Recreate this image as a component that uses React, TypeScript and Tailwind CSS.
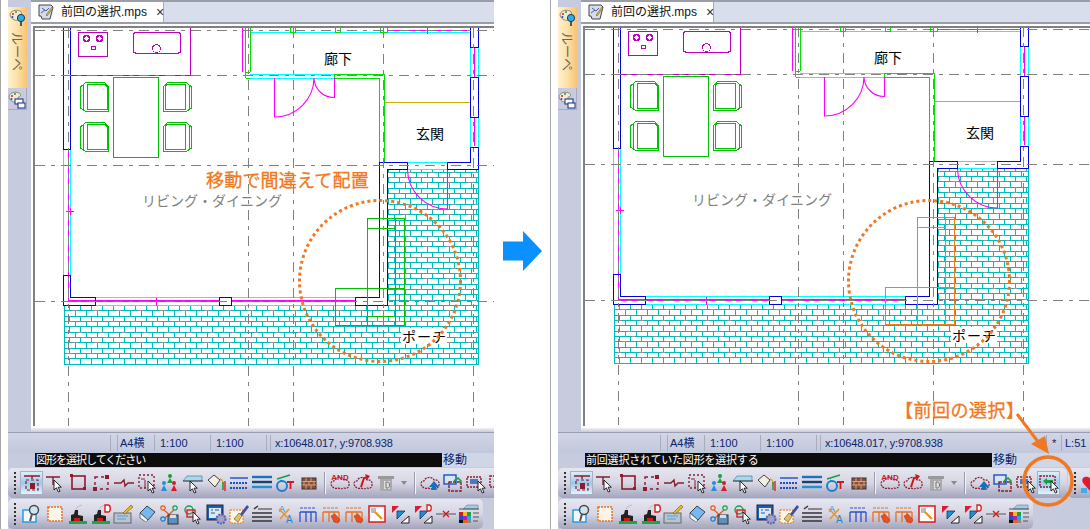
import type { ReactNode } from 'react'

const DR = '#8a1c2c'
const BL = '#1c50c8'

function Cur({ x, y }: { x: number; y: number }) {
  return (
    <path
      transform={`translate(${x} ${y})`}
      d="M0 0v10l2.4-2.2 1.9 4.2 1.7-.8-1.9-4h3.2z"
      fill="#fff"
      stroke="#111"
      strokeWidth="0.9"
    />
  )
}

function Cloud({ c = DR }: { c?: string }) {
  return (
    <path
      d="M3 14c-2-2-1-5 2-5 1-4 8-5 10-1 3-1 6 2 5 5 0 3-3 4-5 3-2 1-4 1-6 0-2 1-5 0-6-2z"
      fill="none"
      stroke={c}
      strokeWidth="1.2"
      strokeDasharray="2 1"
    />
  )
}

function Factory({ d }: { d?: boolean }) {
  return (
    <>
      <rect x="2" y="18" width="18" height="3" fill="#18a848" />
      <path d="M4 18v-6l3-1 1-4h3v5l5 1v5z" fill="#222" />
      <path d="M9 6c1-3 4-3 6-4" stroke="#bbb" fill="none" />
      <rect x="7" y="15" width="6" height="3" fill="#d01818" />
      {d && <path d="M15 2h3c3 0 3 7 0 7h-3z" fill="#fff" stroke="#e01818" strokeWidth="1.4" />}
    </>
  )
}

function Fence({ c, pencil }: { c: string; pencil?: boolean }) {
  return (
    <>
      <path d="M3 5h16" stroke={c} strokeDasharray="3 1" />
      <path d="M3 9h16M3 9v10M9 9v10M14 9v10M19 9v10" stroke={c} strokeWidth="1.3" fill="none" />
      {pencil && <path d="M11 13l4-2 5 6-2 3-4-1z" fill="#e85020" stroke="#a83010" strokeWidth="0.5" />}
    </>
  )
}

function Tri({ d }: { d?: boolean }) {
  return (
    <>
      <path d="M3 3h7l-7 7z" fill="#e01830" />
      <path d="M8 8h8l-8 8z" fill="#1890e0" stroke="#123" strokeWidth="0.7" />
      <path d="M12 20l8-7v7z" fill="#fff" stroke="#222" />
      {d && <path d="M15 2h2c3 0 3 6 0 6h-2z" fill="#fff" stroke="#e01818" strokeWidth="1.3" />}
    </>
  )
}

const row1: ReactNode[] = [
  <>
    <path d="M3 4h16M11 4v3" stroke={DR} strokeWidth="1.4" />
    <path d="M5 8h12v10H5z" fill="none" stroke={DR} strokeWidth="1.2" strokeDasharray="3 2" />
    <rect x="9" y="11" width="5" height="6" fill={DR} />
  </>,
  <>
    <path d="M2 5h14M9 5v8" stroke="#7a2030" strokeWidth="1.4" />
    <Cur x={10} y={8} />
  </>,
  <>
    <rect x="5" y="4" width="13" height="13" fill="none" stroke={DR} strokeWidth="1.6" />
    <path d="M3 2h3v3H3zM16 15h3v3h-3z" fill={DR} />
  </>,
  <>
    <rect x="5" y="5" width="13" height="12" fill="none" stroke={DR} strokeWidth="1.4" strokeDasharray="3 3" />
    <path d="M3 15h4v4H3zM15 3h4v4h-4z" fill={DR} />
  </>,
  <path d="M1 11h7l3-3 1 6 3-3h6" fill="none" stroke={DR} strokeWidth="1.4" />,
  <>
    <rect x="3" y="3" width="15" height="13" fill="none" stroke={DR} strokeWidth="1.4" strokeDasharray="2 2" />
    <path d="M9 8v8M5 7h4" stroke={DR} />
    <Cur x={12} y={9} />
  </>,
  <>
    <circle cx="11" cy="4" r="2" fill="#18a040" />
    <path d="M8 11l3-5 3 5z" fill="#18a040" />
    <circle cx="5" cy="11" r="2" fill="#2090e0" />
    <path d="M2 19l3-6 3 6z" fill="#2090e0" />
    <circle cx="15" cy="11" r="2" fill="#e01828" />
    <path d="M12 19l3-6 3 6z" fill="#e01828" />
  </>,
  <>
    <path d="M1 9l4-5h15v5z" fill="#a8d8ee" stroke="#4a8098" strokeWidth="0.7" />
    <path d="M1 9h20" stroke="#444" />
    <Cur x={8} y={9} />
  </>,
  <>
    <path d="M3 8l6-5 6 5-5 7z" fill="#f0f0e0" stroke="#444" />
    <path d="M15 7c3 0 3 3 3 6" fill="none" stroke="#e8a020" strokeWidth="1.4" />
    <path d="M18 10v8" stroke="#18a040" strokeWidth="1.6" />
    <path d="M20 9v10" stroke="#e02020" strokeWidth="1.4" />
  </>,
  <>
    <path d="M2 6h18" stroke={BL} strokeWidth="1.4" />
    <path d="M2 11h18M2 16h18" stroke={BL} strokeWidth="2" strokeDasharray="2 1" />
  </>,
  <>
    <path d="M1 5h20" stroke="#2070b8" strokeWidth="2.4" />
    <path d="M1 10h20" stroke="#184070" strokeWidth="2.4" />
    <path d="M1 15h20" stroke="#2090d0" strokeWidth="2.4" />
  </>,
  <>
    <path d="M3 7L16 3" stroke="#18a040" strokeWidth="1.6" />
    <circle cx="8" cy="14" r="5" fill="none" stroke="#1c80d0" strokeWidth="2" />
    <path d="M6 8l3 2" stroke="#1c80d0" />
    <path d="M13 10h7M16.5 10v7" stroke="#d81818" strokeWidth="1.8" />
  </>,
  <>
    <rect x="5" y="6" width="14" height="11" fill="#8a5038" stroke="#333" />
    <path d="M5 9.5h14M5 13h14M9 6v4M14 6v4M7 10v3M12 10v3M17 10v3M9 13v4M14 13v4" stroke="#e0b898" strokeWidth="0.8" />
  </>,
]

const row1b: ReactNode[] = [
  <>
    <Cloud />
    <text x="11" y="8" fontSize="8" fontWeight="700" fill="#d01818" textAnchor="middle">
      AND
    </text>
  </>,
  <>
    <Cloud />
    <path d="M9 15l3-9 4-1" fill="none" stroke="#c81818" strokeWidth="2" />
    <path d="M13 2l5 2-3 4z" fill="#c81818" />
  </>,
  <>
    <rect x="3" y="4" width="16" height="3" fill="#999" />
    <rect x="5" y="7" width="12" height="12" fill="#aaa" />
    <rect x="9" y="9" width="6" height="8" fill="#ddd" />
    <path d="M11 10h2c2 0 2 6 0 6h-2z" fill="none" stroke="#777" />
  </>,
]

const row1c: ReactNode[] = [
  <>
    <Cloud />
    <path d="M15 9l5 6h-3l1 3h-6l1-3h-3z" fill="#1a70b8" />
  </>,
  <>
    <rect x="2" y="3" width="12" height="9" fill="#d8e4f4" stroke={BL} strokeWidth="1.4" />
    <rect x="7" y="10" width="12" height="9" fill="none" stroke={DR} strokeWidth="1.4" strokeDasharray="3 1" />
    <path d="M12 9l4-3 3 3-2 2" fill="none" stroke="#18a040" strokeWidth="1.6" />
  </>,
  <>
    <rect x="2" y="5" width="14" height="10" fill="none" stroke={DR} strokeDasharray="2 1" strokeWidth="1.4" />
    <rect x="5" y="7" width="8" height="5" fill="#5078c0" />
    <Cur x={13} y={9} />
  </>,
  <>
    <rect x="2" y="4" width="15" height="11" fill="none" stroke={DR} strokeDasharray="2 1" strokeWidth="1.4" />
    <path d="M5 9l4-3v2h6v3H9v2z" fill="#18a040" />
    <Cur x={13} y={9} />
  </>,
]

const row2: ReactNode[] = [
  <>
    <rect x="2" y="7" width="13" height="12" fill="#f2f8ff" stroke="#1a98e8" strokeWidth="1.4" />
    <circle cx="13" cy="7" r="4.5" fill="#cfe4ee" stroke="#444" strokeWidth="1.4" />
    <path d="M11 11l-2 7" stroke="#555" strokeWidth="2" />
  </>,
  <rect x="4" y="4" width="14" height="14" fill="#fdf4e8" stroke="#e87020" strokeWidth="1.5" strokeDasharray="2 1" />,
  <Factory />,
  <Factory d />,
  <>
    <rect x="1" y="10" width="17" height="10" fill="#b8c4d4" stroke="#666" />
    <path d="M4 13h11M4 16h9" stroke="#58a0d0" />
    <path d="M10 10l8-8 2 2-8 7z" fill="#f0b818" stroke="#555" strokeWidth="0.6" />
  </>,
  <>
    <path d="M4 10l7-7 8 6-7 8z" fill="#78b8f0" stroke="#345" />
    <path d="M4 10l8 7-2 2-6-4z" fill="#f4f4f4" stroke="#345" strokeWidth="0.7" />
    <path d="M6 19h12" stroke="#bbb" />
  </>,
  <>
    <circle cx="4" cy="5" r="2.2" fill="none" stroke="#e85818" strokeWidth="1.2" />
    <circle cx="16" cy="5" r="2.2" fill="none" stroke="#18a050" strokeWidth="1.2" />
    <path d="M5 7l9 8M15 7l-9 8" stroke="#e85818" strokeWidth="1.2" />
    <rect x="9" y="12" width="10" height="9" fill="#5a90c0" stroke="#333" />
    <rect x="11" y="12" width="6" height="3" fill="#ddd" />
    <circle cx="4" cy="16" r="2.2" fill="none" stroke="#1878d8" strokeWidth="1.2" />
  </>,
  <>
    <circle cx="7" cy="7" r="4" fill="none" stroke="#18a050" strokeWidth="1.4" />
    <rect x="5" y="7" width="8" height="7" fill="none" stroke="#d82020" strokeWidth="1.4" />
    <Cur x={11} y={9} />
  </>,
  <>
    <rect x="2" y="2" width="16" height="15" fill="#1a60b0" stroke="#224" />
    <rect x="4" y="5" width="12" height="10" fill="#dfe8f4" />
    <path d="M6 7h2M10 7h4M6 10h4" stroke="#1a60b0" />
    <circle cx="16" cy="16" r="4.5" fill="#a0a0c8" stroke="#6060a0" strokeWidth="2" strokeDasharray="2 1" />
  </>,
  <>
    <rect x="2" y="7" width="13" height="13" fill="#fdf6e6" stroke="#e87020" strokeDasharray="2 1" />
    <path d="M6 16l5-6 3 3-4 6z" fill="#e8c060" stroke="#665" strokeWidth="0.7" />
    <path d="M12 11l7-9 2 2-7 9z" fill="#4050a0" />
  </>,
  <>
    <path d="M3 6l4-3M1 10h20M1 14h20M1 18h20" stroke="#333" strokeWidth="1.5" />
    <path d="M7 6h14" stroke="#333" />
  </>,
  <>
    <text x="5" y="9" fontSize="9" fill="#1a88d0">
      A
    </text>
    <text x="12" y="20" fontSize="10" fill="#1a88d0">
      A
    </text>
    <path d="M5 6l10 10M15 6L6 16" stroke="#e89020" strokeWidth="1.4" />
  </>,
  <Fence c="#3050c8" />,
  <Fence c="#e87020" pencil />,
  <Fence c="#e87020" pencil />,
  <>
    <rect x="3" y="3" width="16" height="16" fill="#fff" stroke="#e01818" strokeWidth="1.5" />
    <rect x="5" y="5" width="5" height="5" fill="#bbb" />
    <path d="M9 9l7 7" stroke="#e89020" strokeWidth="2.2" />
  </>,
  <Tri />,
  <Tri d />,
  <>
    <path d="M1 11h20" stroke="#777" strokeWidth="1.4" />
    <path d="M8 8l6 6M14 8l-6 6" stroke="#d81818" strokeWidth="1.4" />
  </>,
  <>
    <path d="M5 6l4-4h11v4z" fill="#98d0e8" stroke="#668" strokeWidth="0.5" />
    <path d="M1 6h20M15 10h6M15 14h6M15 18h5" stroke="#555" />
    <rect x="1" y="9" width="4" height="4" fill="#e01818" />
    <rect x="5" y="9" width="4" height="4" fill="#f0c018" />
    <rect x="9" y="9" width="4" height="4" fill="#18a040" />
    <rect x="1" y="13" width="4" height="4" fill="#1850d0" />
    <rect x="5" y="13" width="4" height="4" fill="#c018c0" />
    <rect x="9" y="13" width="4" height="4" fill="#18b0d0" />
    <rect x="1" y="17" width="4" height="3" fill="#111" />
    <rect x="5" y="17" width="4" height="3" fill="#e86018" />
    <rect x="9" y="17" width="4" height="3" fill="#888" />
  </>,
]

function Btn({ children, active }: { children: ReactNode; active?: boolean }) {
  return (
    <div
      className={`flex h-[24px] w-[23px] shrink-0 items-center justify-center ${
        active ? 'border border-[#a8b0c4] bg-gradient-to-b from-[#dfeef8] via-[#9cc8ec] to-[#e4f2fb]' : ''
      }`}
    >
      <svg viewBox="0 0 22 22" width="22" height="22" className="shrink-0">
        {children}
      </svg>
    </div>
  )
}

function Grip() {
  return (
    <div className="ml-[6px] mr-[4px] flex h-[22px] w-[2px] shrink-0 flex-col justify-between">
      {[0, 1, 2, 3, 4, 5].map((i) => (
        <div key={i} className="h-[2px] w-[2px] bg-[#333]" />
      ))}
    </div>
  )
}

function Sep() {
  return <div className="ml-[5px] mr-[2px] h-[22px] w-[2px] shrink-0 bg-[#f4f4f8] border-l border-[#9a9ab0]" />
}

function Palette({ kind }: { kind: 'loupe' | 'window' }) {
  return (
    <svg viewBox="0 0 18 18" width="18" height="18">
      <path d="M1 6c0-4 6-6 10-4 2 1 2 3 0 4-2 0-1 2 0 3 0 3-8 4-10-3z" fill="#f4ead0" stroke="#665" strokeWidth="0.7" />
      <circle cx="4" cy="5" r="1" fill="#e01818" />
      <circle cx="7" cy="3" r="1" fill="#18a040" />
      <circle cx="3.5" cy="8" r="1" fill="#1850d0" />
      {kind === 'loupe' ? (
        <>
          <circle cx="12" cy="9" r="3.6" fill="#28b0e8" stroke="#235" strokeWidth="1" />
          <path d="M12 13v4" stroke="#235" strokeWidth="1.6" />
        </>
      ) : (
        <>
          <rect x="7" y="8" width="8" height="5" fill="#fff" stroke="#223a90" strokeWidth="1.1" />
          <rect x="10" y="12" width="7" height="5" fill="#fff" stroke="#223a90" strokeWidth="1.1" />
        </>
      )}
    </svg>
  )
}

function Chair({ x, y, flip }: { x: number; y: number; flip?: boolean }) {
  return (
    <g transform={flip ? `translate(${x + 29} ${y}) scale(-1 1)` : `translate(${x} ${y})`} fill="none" stroke="#00c000">
      <path d="M5.500 .5H24.500L28.500 4.500V29.500H5.500L.5 26V5z" />
      <path d="M3 3v24M7 2.500h18l2 2v23H7z" />
    </g>
  )
}

function Plan({ moved, width }: { moved: string; width: number }) {
  const wall = '#0000e0'
  const cy = '#00ffff'
  const mg = '#ff00ff'
  const gr = '#00e000'
  return (
    <svg viewBox={`35 28 ${width} 398`} width={width} height="398" className="block">
      <defs>
        <pattern id={`brick${width}`} width="22" height="32" patternUnits="userSpaceOnUse" x="64" y="305">
          <path
            d="M0 .5H22M0 5.500H22M0 11.500H22M0 16.500H22M0 21.500H22M0 27.500H22
               M5.500 0V5M16.500 0V5M.5 5V11M11.500 5V11M5.500 11V16M16.500 11V16M.5 16V21M11.500 16V21M5.500 21V27M16.500 21V27M.5 27V32M11.500 27V32"
            stroke="#00bcbc"
            fill="none"
          />
          <path d="M8 5.500h5M18 .5h3M3 16.500h4M14 27.500h4" stroke="#8a9a9a" fill="none" />
        </pattern>
      </defs>
      <g shapeRendering="crispEdges">
        <g transform={width > 470 ? 'translate(0 -1)' : undefined} fill="none">
          {/* brick area */}
          <path d="M64 305H355V305h32V169h91v195H64z" fill={`url(#brick${width})`} stroke="#00bcbc" strokeWidth="1" />

          {/* kitchen */}
          <g stroke="#c000c0">
            <path d="M70 75.500H190.500V28" />
            <path d="M78.500 32.500h29v24h-29zM133.500 34l2-2h43l2 2v18l-2 1h-43l-2-1z" />
            <circle cx="86.500" cy="38.500" r="3" strokeWidth="1.600" />
            <circle cx="99.500" cy="38.500" r="3" strokeWidth="1.600" />
            <circle cx="93.500" cy="48" r="2" />
            <circle cx="156.500" cy="48.500" r="4" />
          </g>
          <path d="M242.500 28V72" stroke={mg} />

          {/* table and chairs */}
          <rect x="113.500" y="77.500" width="45" height="80" stroke="#00c000" />
          <Chair x={80} y={82} />
          <Chair x={163} y={82} flip />
          <Chair x={80} y={122} />
          <Chair x={163} y={122} flip />

          {/* walls */}
          <path d="M63.500 149V275M70.500 149V275" stroke={cy} />
          <path d="M68.500 149V300" stroke={mg} />
          <path d="M95 297.500H355M95 305.500H355" stroke={cy} />
          <path d="M68 300.500H355" stroke={mg} strokeWidth="2" />
          <path d="M63.500 28V149.500H70.500V28" stroke={wall} />
          <path d="M63.500 275.500V305.500H95.500V297.500H70.500V275.500z" stroke={wall} />
          <rect x="219.500" y="297.500" width="12" height="8" stroke={wall} fill="#fff" />
          <path d="M379.500 162V297.500H355.500V305.500H387.500V169.500H407.500V162.500H379.500z" stroke={wall} fill="#fff" />
          <path d="M407.500 162.500H447.500M407.500 169.500H447.500" stroke={cy} />
          <path d="M447.500 169.500V162.500H470.500V147.500H478.500V169.500z" stroke={wall} fill="#fff" />
          <path d="M470.500 47V147M478.500 47V147M470.500 117V147" stroke={cy} />
          <path d="M474.500 48V146" stroke={mg} />
          <rect x="470.500" y="77.500" width="8" height="40" stroke={wall} fill="#fff" />
          <path d="M470.500 28V47.500H478.500V28" stroke={wall} fill="#fff" />

          {/* corridor */}
          <path d="M250 32.500H470M250 27.500H470M250 74.500H334M250 78.500H334" stroke={cy} />
          <path d="M388 30.500H470M427.500 28V34" stroke={mg} />
          <path d="M250.500 28V72M245.500 28V78M245.500 72.500H250M245.500 78.500H250" stroke={gr} />
          <path d="M290.500 28V32.500H295.500V28M335.500 28V32.500H340.500V28M380.500 28V32.500H387.500V28" stroke={gr} />
          <path d="M334.500 74.500H384.500V162M334.500 74V78.500H379.500V162" stroke={gr} strokeWidth="1.300" />
          <path d="M385 102.500H470" stroke="#c8b400" />
          <path d="M66 211.500H74M70.500 208V215M156.500 298V306" stroke={mg} />

          {/* piece moved by mistake */}
          <g stroke={moved}>
            <rect x="367.500" y="218.500" width="37" height="107" />
            <rect x="335.500" y="288.500" width="69" height="37" />
            <path d="M395.500 218V325M367.500 228.500H395M367.500 316.500H395" />
          </g>

          {/* grid */}
          <g stroke="#808080" strokeDasharray="10 6 4 6">
            <path d="M35 30.500H540M35 75.500H540M35 165.500H540M35 301.500H540" />
            <path d="M68.500 28V426M248.500 28V426M293.500 28V426M383.500 28V426M473.500 28V426" />
          </g>
        </g>
      </g>

      <g transform={width > 470 ? 'translate(0 -1)' : undefined}>
        {/* door swings */}
        <path d="M274.500 78V117A39.500 39.500 0 0 0 314 78A20 20 0 0 0 334.500 97.500V78" fill="none" stroke={mg} strokeWidth="1.100" />
        <path d="M407.500 170A40 40 0 0 0 447.500 209V170" fill="none" stroke={mg} strokeWidth="1.100" />
        <rect x="401" y="328" width="46" height="16" fill="#fff" />
        <text x="324" y="64" fontSize="14" fill="#000">
          廊下
        </text>
        <text x="416" y="139" fontSize="14" fill="#000">
          玄関
        </text>
        <text x="142" y="206" fontSize="14" fill="#808080">
          リビング・ダイニング
        </text>
        <text x="402" y="342" fontSize="14" fill="#000" letterSpacing="1">
          ポーチ
        </text>
      </g>
      <ellipse cx={width > 470 ? 379 : 380} cy="281" rx="80.500" ry="80.500" fill="none" stroke="#f07820" strokeWidth="3" strokeDasharray="3 3" />
      {width < 470 && (
        <text x="206" y="187" fontSize="18" letterSpacing="0.200" fill="#f07820" stroke="#f07820" strokeWidth="0.300">
          移動で間違えて配置
        </text>
      )}
    </svg>
  )
}

function CadPanel({
  width,
  message,
  messageClass,
  moved,
  after,
  className,
  children,
}: {
  width: number
  message: string
  messageClass: string
  moved: string
  after?: boolean
  className: string
  children?: ReactNode
}) {
  return (
    <div className={`relative h-full shrink-0 overflow-hidden border-l border-[#a8a8a8] bg-white pl-[7px] ${className}`}>
      <div className="flex h-full flex-col bg-[#c6ccde]">
        <div className="flex h-[432px] shrink-0">
          {/* side tabs */}
          <div className="flex w-[23px] shrink-0 flex-col pt-[7px]">
            <div className="flex h-[81px] w-[19px] flex-col items-center bg-gradient-to-r from-[#fff2d0] via-[#fde0a4] to-[#f8c272]">
              <div className="mt-[2px]">
                <Palette kind="loupe" />
              </div>
              <span className="mt-[5px] text-[13px] leading-none text-[#666] [writing-mode:vertical-rl] [text-orientation:sideways]">
                ルーペ
              </span>
            </div>
            <div className="flex h-[22px] w-[19px] items-center justify-center border-r border-b border-[#aab] pt-[2px]">
              <Palette kind="window" />
            </div>
          </div>

          <div className="flex min-w-0 flex-1 flex-col bg-white">
            <div className="flex h-[24px] shrink-0 border-t-2 border-b-2 border-[#9a9ea8] bg-[#d8deec]">
              <div className="flex w-[133px] items-center whitespace-nowrap border-r border-[#a8acb8] bg-white pl-[7px] text-[12px] text-[#111]">
                <svg viewBox="0 0 16 16" width="16" height="16" className="shrink-0">
                  <path d="M1 1h12l2 2-3 12H4l-1-3H1z" fill="#d8dce8" stroke="#444" />
                  <path d="M4 4l4 3 3-3M3 9l4-3" stroke="#4060a0" fill="none" />
                  <path d="M8 11l6-8 1 1-6 8z" fill="#f0c020" stroke="#444" strokeWidth="0.5" />
                </svg>
                <span className="ml-[7px]">前回の選択.mps</span>
                <span className="ml-[9px] text-[14px] leading-none text-[#333]">×</span>
              </div>
            </div>
            <div className="flex-1 pt-[2px] pl-[2px]">
              <div className="box-content h-[398px] overflow-hidden border-t-2 border-l-2 border-[#808080]">
                <Plan moved={moved} width={width - 35} />
              </div>
            </div>
            <div className="h-[4px] shrink-0 bg-gradient-to-b from-[#f0f0f0] to-[#c8ccd8]" />
          </div>
        </div>

        {/* status bar */}
        <div className="flex h-[21px] shrink-0 items-center border-t border-[#9a9eb0] bg-gradient-to-b from-[#d0d6e6] to-[#c2c8dc] pl-[102px] text-[11px] text-[#0a246a]">
          <div className="h-[16px] w-[8px] shrink-0 border-x border-[#a8acbc]" />
          <div className="w-[36px] shrink-0 pl-[2px] leading-[16px]">A4横</div>
          <div className="h-[16px] w-[56px] shrink-0 border-l border-[#a8acbc] pl-[5px] leading-[16px]">1:100</div>
          <div className="h-[16px] w-[56px] shrink-0 border-l border-[#a8acbc] pl-[5px] leading-[16px]">1:100</div>
          <div className="h-[16px] w-[5px] shrink-0 border-x border-[#a8acbc]" />
          <div className="h-[16px] w-[226px] shrink-0 border-r border-[#a8acbc] pl-[4px] leading-[16px] tracking-[-0.15px]">
            x:10648.017, y:9708.938
          </div>
          {after && (
            <>
              <div className="h-[16px] w-[15px] shrink-0 border-r border-[#a8acbc] pl-[5px] leading-[16px]">*</div>
              <div className="shrink-0 pl-[3px] leading-[16px]">L:51</div>
            </>
          )}
        </div>

        {/* message line */}
        <div className="flex h-[14px] shrink-0 pl-[27px] text-[12px] leading-[14px]">
          <div className={`w-[407px] shrink-0 overflow-hidden whitespace-nowrap bg-[#0c0c0c] pl-[1px] text-white ${messageClass}`}>{message}</div>
          <div className="flex-1 bg-[#d0d6e6] pl-[1px] text-[#0a246a]">移動</div>
        </div>

        {/* toolbars */}
        <div className="mt-[1px] flex h-[30px] shrink-0 items-center">
          <div className="flex h-[30px] w-[509px] shrink-0 items-center rounded-[5px] bg-gradient-to-b from-[#e6e6f0] via-[#d6d6e4] to-[#a4a4bc]">
            <Grip />
            <Btn active>{row1[0]}</Btn>
            {row1.slice(1).map((icon, i) => (
              <Btn key={i}>{icon}</Btn>
            ))}
            <Sep />
            {row1b.map((icon, i) => (
              <Btn key={i}>{icon}</Btn>
            ))}
            <div className="ml-[4px] mr-[2px] h-0 w-0 shrink-0 border-x-[3px] border-t-[4px] border-x-transparent border-t-[#888]" />
            <Sep />
            {row1c.map((icon, i) => (
              <Btn key={i} active={after && i === 3}>
                {icon}
              </Btn>
            ))}
          </div>
          <div className="ml-[1px] flex h-[30px] w-[40px] shrink-0 items-center rounded-l-[5px] bg-gradient-to-b from-[#e6e6f0] via-[#d6d6e4] to-[#a4a4bc]">
            <Grip />
            <svg viewBox="0 0 22 22" width="22" height="22" className="shrink-0">
              <path d="M11 20L3 11C0 6 6 2 11 7c5-5 11-1 8 4z" fill="#e01830" />
              <path d="M1 16h6v5H1z" fill="#48a8e8" />
            </svg>
          </div>
        </div>
        <div className="mt-[1px] flex h-[30px] shrink-0">
          <div className="flex h-[30px] w-[475px] shrink-0 items-center rounded-[5px] bg-gradient-to-b from-[#e6e6f0] via-[#d6d6e4] to-[#a4a4bc]">
            <Grip />
            {row2.map((icon, i) => (
              <Btn key={i}>{icon}</Btn>
            ))}
          </div>
        </div>
      </div>
      {children}
    </div>
  )
}

export default function App() {
  return (
    <div className="flex h-[529px] w-[1090px] overflow-hidden bg-white [font-family:'Liberation_Sans','Noto_Sans_CJK_JP',sans-serif]">
      <CadPanel
        width={494}
        moved="#00c000"
        message="図形を選択してください"
        messageClass="text-[11px] tracking-[-1px]"
        className="w-[494px]"
      />

      <div className="flex w-[56px] shrink-0 items-center justify-center">
        <svg viewBox="0 0 39 40" width="39" height="40" className="mt-[-28px]">
          <path d="M0 10.500H20V0L39 20 20 40V29.500H0z" fill="#0a90ff" />
        </svg>
      </div>

      <CadPanel
        width={540}
        moved="#f08018"
        after
        message="前回選択されていた図形を選択する"
        messageClass="text-[11px] tracking-[-0.2px]"
        className="w-[540px]"
      >
        {/* callout over the toolbar */}
        <svg viewBox="550 0 540 529" width="540" height="529" className="pointer-events-none absolute inset-0">
          <text x="894" y="417" fontSize="18" letterSpacing="0.500" fill="#f07820" stroke="#f07820" strokeWidth="0.300">
            【前回の選択】
          </text>
          <path d="M1016 414L1041 447" stroke="#f07820" strokeWidth="3" />
          <path d="M1048 454L1030 444L1044 436z" fill="#f07820" />
          <circle cx="1047" cy="481" r="24" fill="none" stroke="#f07820" strokeWidth="3.500" />
        </svg>
      </CadPanel>
    </div>
  )
}
